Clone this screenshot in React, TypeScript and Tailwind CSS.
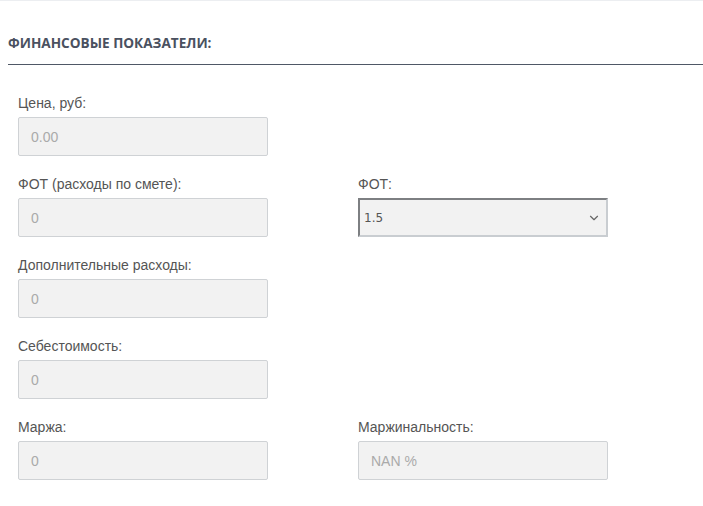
import { ChevronDown } from 'lucide-react';

type Field = { label: string; value: string; kind?: 'select' };

const ROWS: (Field | null)[][] = [
  [{ label: 'Цена, руб:', value: '0.00' }, null],
  [{ label: 'ФОТ (расходы по смете):', value: '0' }, { label: 'ФОТ:', value: '1.5', kind: 'select' }],
  [{ label: 'Дополнительные расходы:', value: '0' }, null],
  [{ label: 'Себестоимость:', value: '0' }, null],
  [{ label: 'Маржа:', value: '0' }, { label: 'Маржинальность:', value: 'NAN %' }],
];

function FieldBox({ f }: { f: Field }) {
  return (
    <div className="flex flex-col">
      <label className="h-5 leading-5 text-[14px] text-[#555] mb-1">{f.label}</label>
      {f.kind === 'select' ? (
        <div className="h-[39px] flex items-center justify-between bg-[#f2f2f2] border-2 border-t-[#7d7f82] border-l-[#7d7f82] border-b-[#c9cdd1] border-r-[#c9cdd1] pl-[4px] pr-[5px] font-['DejaVu_Sans',sans-serif] text-[12px] text-[#555]">
          <span>{f.value}</span>
          <ChevronDown className="w-[14px] h-[14px] text-[#666]" strokeWidth={2} />
        </div>
      ) : (
        <div className="h-[39px] flex items-center bg-[#f2f2f2] border border-[#cfd2d5] rounded-[2px] px-3 pt-px text-[14px] text-[#aaa]">
          {f.value}
        </div>
      )}
    </div>
  );
}

export default function App() {
  return (
    <div className="w-[703px] h-[506px] bg-white border-t border-[#eceef1] font-['Liberation_Sans',Arial,sans-serif] overflow-hidden">
      <div className="pl-2 pt-[34px]">
        <h3 className="font-['Open_Sans',sans-serif] font-bold text-[13.6px] leading-4 text-[#4a5160]">
          ФИНАНСОВЫЕ ПОКАЗАТЕЛИ:
        </h3>
        <div className="mt-[13px] h-px bg-[#4f5866]" />
      </div>
      <div className="pl-[18px] pt-[28px] flex flex-col gap-[18px]">
        {ROWS.map((row, i) => (
          <div key={i} className="grid grid-cols-[250px_250px] gap-x-[90px]">
            {row.map((f, j) => (f ? <FieldBox key={j} f={f} /> : <div key={j} />))}
          </div>
        ))}
      </div>
    </div>
  );
}
